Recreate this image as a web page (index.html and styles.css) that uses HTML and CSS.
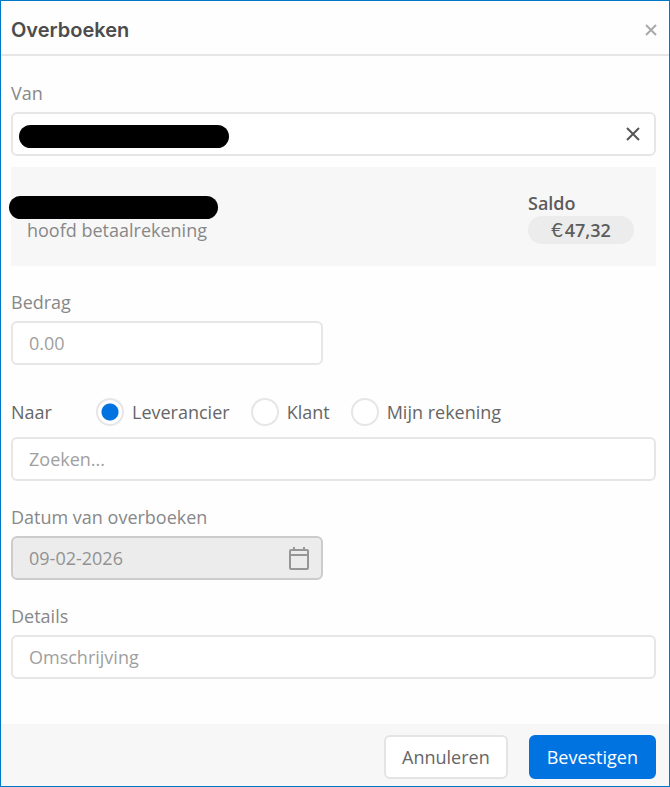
FILE: index.html
```html
<!doctype html>
<html lang="nl">
    <head>
        <meta charset="utf-8">
        <title>Overboeken</title>
        <link rel="stylesheet" href="styles.css">
    </head>

    <body>
    <form class="dialog">
        <header class="dialog-header">
            <h1>Overboeken</h1>
            <button type="button" class="icon-button close" aria-label="Sluiten">
                <svg width="12" height="12" viewBox="0 0 12 12"><path d="M1 1L11 11M11 1L1 11"/></svg>
            </button>
        </header>

        <div class="dialog-body">
            <div class="group">
                <label for="from">Van</label>
                <div class="field">
                    <input type="text" id="from" readonly>
                    <span class="redacted"></span>
                    <button type="button" class="icon-button clear" aria-label="Wissen">
                        <svg width="14" height="14" viewBox="0 0 14 14"><path d="M1 1L13 13M13 1L1 13"/></svg>
                    </button>
                </div>
                <div class="account">
                    <div class="account-name">
                        <span class="redacted"></span>
                        <div class="account-type">hoofd betaalrekening</div>
                    </div>
                    <div class="balance">
                        <div class="balance-label">Saldo</div>
                        <div class="balance-value"><span class="euro">€</span>47,32</div>
                    </div>
                </div>
            </div>

            <div class="group">
                <label for="amount">Bedrag</label>
                <div class="field half">
                    <input type="text" id="amount" placeholder="0.00">
                </div>
            </div>

            <div class="group target">
                <div class="radios" role="radiogroup" aria-labelledby="target-label">
                    <span class="radios-label" id="target-label">Naar</span>
                    <label class="radio"><input type="radio" name="target" checked>Leverancier</label>
                    <label class="radio"><input type="radio" name="target">Klant</label>
                    <label class="radio"><input type="radio" name="target">Mijn rekening</label>
                </div>
                <div class="field">
                    <input type="text" placeholder="Zoeken..." aria-label="Zoeken">
                </div>
            </div>

            <div class="group">
                <label for="date">Datum van overboeken</label>
                <div class="field half">
                    <input type="text" id="date" value="09-02-2026" disabled>
                    <svg class="calendar" width="22" height="24" viewBox="0 0 22 24">
                        <rect x="2" y="4" width="18" height="19" rx="1"/>
                        <path d="M2 9H20M6 1V4M16 1V4"/>
                    </svg>
                </div>
            </div>

            <div class="group">
                <label for="details">Details</label>
                <div class="field">
                    <input type="text" id="details" placeholder="Omschrijving">
                </div>
            </div>
        </div>

        <footer class="dialog-footer">
            <button type="button" class="button">Annuleren</button>
            <button type="submit" class="button primary">Bevestigen</button>
        </footer>
    </form>
    </body>
</html>
```
FILE: styles.css
```css
* {
    box-sizing: border-box;
}

body {
    margin: 0;
    font-family: "Open Sans", sans-serif;
    font-size: 18px;
    line-height: 24px;
    color: #666;
}

input,
button {
    font: inherit;
    color: inherit;
}

.dialog {
    display: flex;
    flex-direction: column;
    min-height: 100vh;
    border: 1px solid #0078c8;
    background-color: #fefefe;
}

.dialog-header {
    display: flex;
    align-items: center;
    justify-content: space-between;
    padding: 17px 12px 12px 10px;
    border-bottom: 2px solid #e6e6e6;
}

h1 {
    margin: 0;
    font-family: Inter, sans-serif;
    font-size: 20px;
    font-weight: 600;
    line-height: 24px;
    color: #4c4c4c;
}

.icon-button {
    display: flex;
    align-items: center;
    padding: 0;
    border: 0;
    background: none;
    cursor: pointer;
}

svg {
    fill: none;
    stroke: currentColor;
    stroke-width: 2;
}

.close {
    color: #aaa;
}

.dialog-body {
    display: flex;
    flex-direction: column;
    flex: 1;
    gap: 24px;
    padding: 25px 13px 44px 10px;
}

.group {
    display: flex;
    flex-direction: column;
    gap: 7px;
    color: #888;
}

.field {
    position: relative;
}

.field input {
    display: block;
    width: 100%;
    height: 44px;
    padding: 0 16px;
    border: 2px solid #e6e6e6;
    border-radius: 6px;
    background-color: #fff;
    color: #888;
}

.field input::placeholder {
    color: #a0a0a0;
    opacity: 1;
}

.field input:disabled {
    border-color: #ccc;
    background-color: #ececec;
    color: #929292;
}

.half {
    width: 312px;
}

.clear,
.calendar {
    position: absolute;
    top: 0;
    bottom: 0;
    margin: auto 0;
}

.clear {
    right: 16px;
    color: #555;
}

.calendar {
    right: 13px;
    color: #969696;
}

/* blacked out account numbers */
.redacted {
    position: absolute;
    width: 210px;
    height: 23px;
    border-radius: 12px;
    background-color: #000;
}

.field .redacted {
    top: 13px;
    left: 8px;
}

.account {
    display: flex;
    justify-content: space-between;
    margin-top: 4px;
    padding: 24px 22px 22px 16px;
    background-color: #f7f7f7;
}

.account-name {
    position: relative;
    padding-top: 27px;
}

.account-name .redacted {
    top: 5px;
    left: -18px;
    width: 209px;
}

.balance {
    width: 106px;
    font-weight: 600;
    color: #5c5c5c;
}

.balance-value {
    margin-top: 1px;
    border-radius: 14px;
    background-color: #ececec;
    line-height: 28px;
    text-align: center;
}

.euro {
    margin-right: 2px;
    font-family: Lato, sans-serif;
    font-size: 20px;
    font-weight: 400;
    line-height: 24px;
}

.target {
    gap: 11px;
    margin-top: 9px;
}

.radios {
    display: flex;
    flex-wrap: wrap;
    align-items: center;
    gap: 21px;
    color: #666;
}

.radios-label {
    width: 64px;
}

.radio {
    display: flex;
    align-items: center;
    gap: 8px;
}

.radio input {
    width: 28px;
    height: 28px;
    margin: 0;
    border: 2px solid #e6e6e6;
    border-radius: 50%;
    appearance: none;
    background-color: #fff;
}

.radio input:checked {
    background-image: radial-gradient(circle, #0073e1 8px, transparent 9px);
}

.dialog-footer {
    display: flex;
    justify-content: flex-end;
    gap: 21px;
    padding: 11px 13px 7px;
    background-color: #f7f7f7;
}

.button {
    height: 44px;
    padding: 0 16px;
    border: 2px solid #e4e4e4;
    border-radius: 6px;
    background-color: #fff;
    cursor: pointer;
}

.primary {
    border-color: #0073e1;
    background-color: #0073e1;
    color: #fff;
}
```
